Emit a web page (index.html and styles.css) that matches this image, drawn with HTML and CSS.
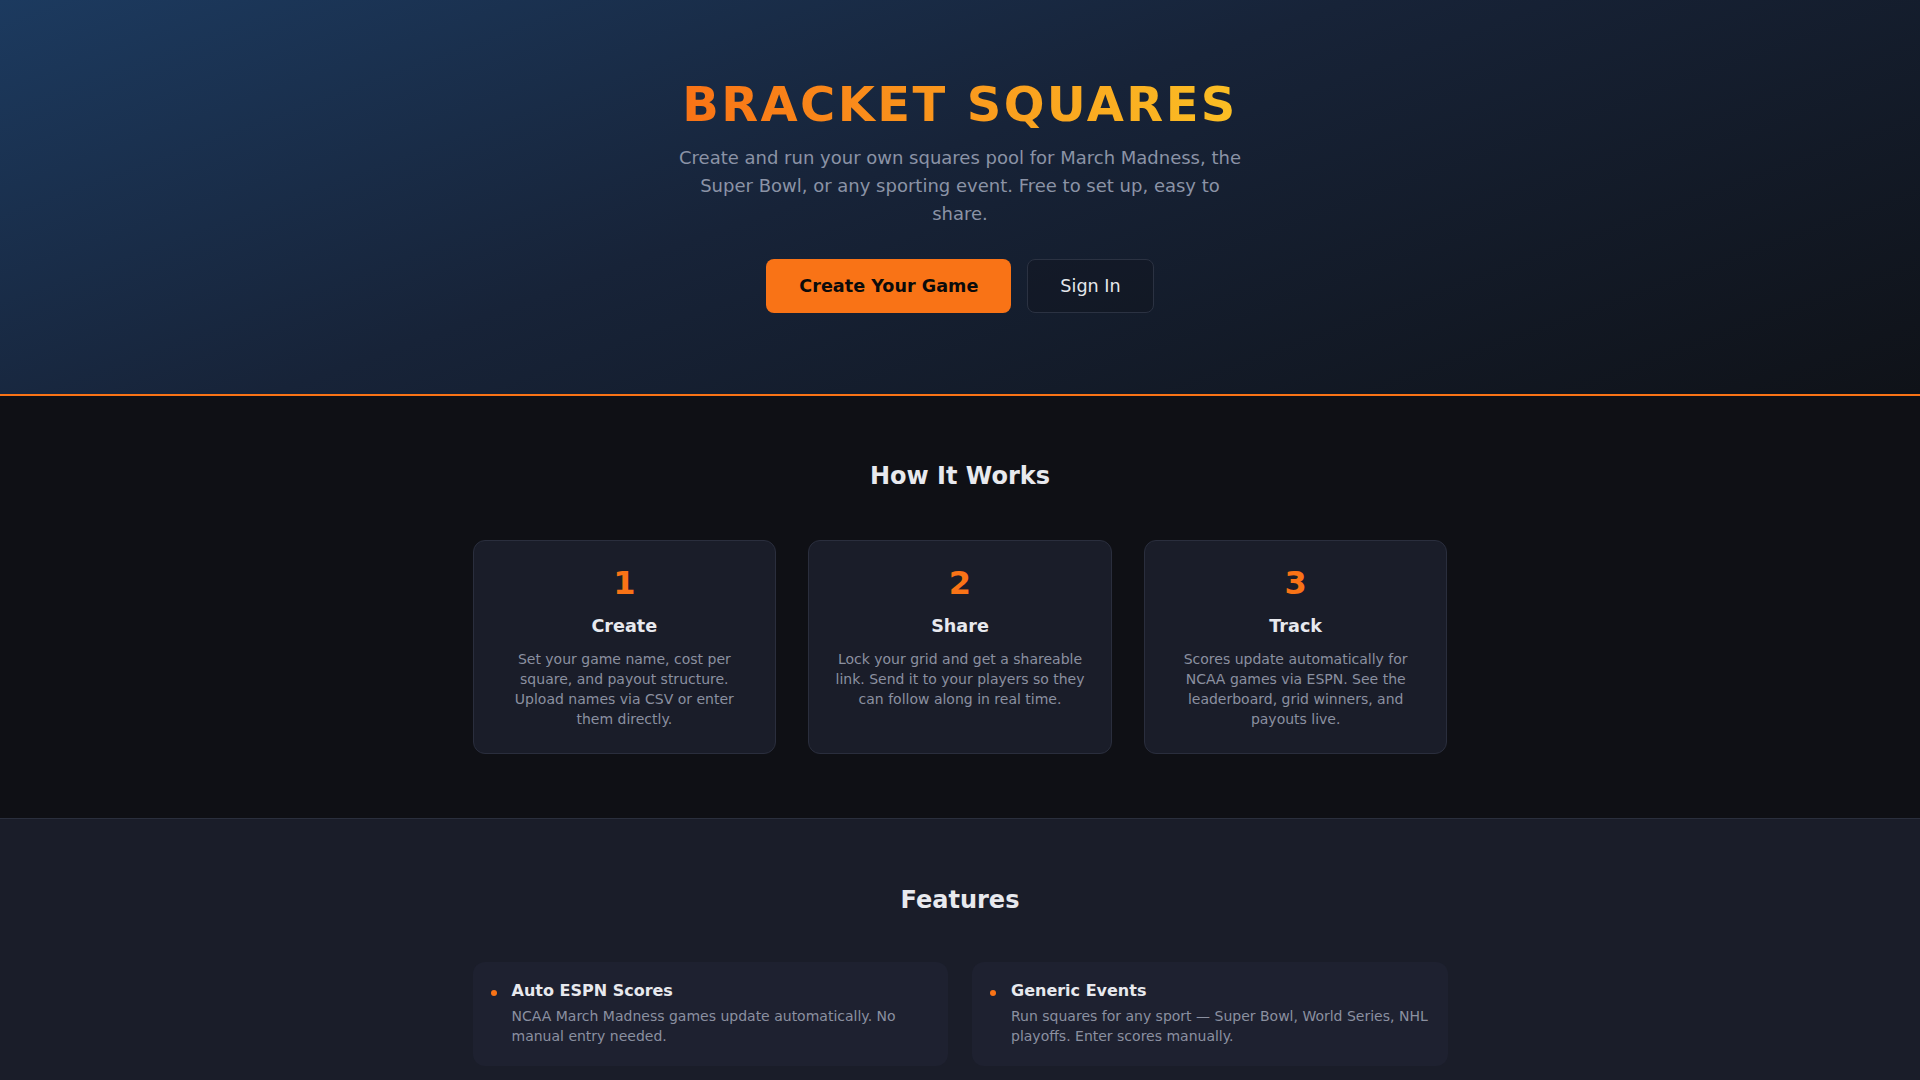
FILE: index.html
```html
<!DOCTYPE html>
<html lang="en">
<head>
  <meta charset="UTF-8">
  <title>Bracket Squares</title>
  <link rel="stylesheet" href="styles.css">
</head>
<body>
  <header class="hero">
    <h1 class="hero-title">BRACKET SQUARES</h1>
    <p class="hero-sub">Create and run your own squares pool for March Madness, the Super Bowl, or any sporting event. Free to set up, easy to share.</p>
    <div class="hero-actions">
      <a class="btn btn-primary" href="#">Create Your Game</a>
      <a class="btn btn-ghost" href="#">Sign In</a>
    </div>
  </header>

  <section class="steps">
    <h2 class="section-title">How It Works</h2>
    <div class="steps-grid">
      <div class="step-card">
        <div class="step-num">1</div>
        <h3>Create</h3>
        <p>Set your game name, cost per square, and payout structure. Upload names via CSV or enter them directly.</p>
      </div>
      <div class="step-card">
        <div class="step-num">2</div>
        <h3>Share</h3>
        <p>Lock your grid and get a shareable link. Send it to your players so they can follow along in real time.</p>
      </div>
      <div class="step-card">
        <div class="step-num">3</div>
        <h3>Track</h3>
        <p>Scores update automatically for NCAA games via ESPN. See the leaderboard, grid winners, and payouts live.</p>
      </div>
    </div>
  </section>

  <section class="features">
    <h2 class="section-title">Features</h2>
    <div class="features-grid">
      <div class="feature">
        <span class="feature-dot"></span>
        <div>
          <h4>Auto ESPN Scores</h4>
          <p>NCAA March Madness games update automatically. No manual entry needed.</p>
        </div>
      </div>
      <div class="feature">
        <span class="feature-dot"></span>
        <div>
          <h4>Generic Events</h4>
          <p>Run squares for any sport — Super Bowl, World Series, NHL playoffs. Enter scores manually.</p>
        </div>
      </div>
    </div>
  </section>
</body>
</html>
```

FILE: styles.css
```css
* {
  box-sizing: border-box;
}
body {
  margin: 0;
  font-family: "DejaVu Sans", Verdana, sans-serif;
  background: #0f1015;
  color: #e5e7eb;
}
h1, h2, h3, h4, p {
  margin: 0;
}

/* hero */
.hero {
  background: linear-gradient(160deg, #1c3a5f 0%, #172338 45%, #0f1218 100%);
  border-bottom: 2px solid #f97316;
  text-align: center;
  padding: 76px 24px 81px;
}
.hero-title {
  font-size: 3rem;
  font-weight: 700;
  letter-spacing: 0.05em;
  background: linear-gradient(90deg, #f97316, #fbbf24);
  -webkit-background-clip: text;
  background-clip: text;
  color: transparent;
  display: inline-block;
}
.hero-sub {
  max-width: 570px;
  margin: 12px auto 31px;
  font-size: 18px;
  line-height: 1.55;
  color: #8b93a6;
}
.hero-actions {
  display: flex;
  justify-content: center;
  gap: 16px;
}
.btn {
  font-size: 1.1rem;
  padding: 16px 32px;
  border-radius: 8px;
  text-decoration: none;
  border: 1px solid transparent;
}
.btn-primary {
  background: #f97316;
  color: #0b0b0b;
  font-weight: 700;
}
.btn-ghost {
  background: rgba(15, 17, 23, 0.3);
  border-color: #2b3242;
  color: #e5e7eb;
}

/* sections */
.section-title {
  font-size: 1.5rem;
  font-weight: 700;
  text-align: center;
  color: #e8e9ee;
  margin-bottom: 48px;
}
.steps {
  padding: 66px 24px 64px;
}
.steps .section-title {
  margin-bottom: 50px;
}
.steps-grid {
  display: grid;
  grid-template-columns: repeat(3, 1fr);
  gap: 32px;
  max-width: 975px;
  margin: 0 auto;
}
.step-card {
  background: #1a1d29;
  border: 1px solid #2a2e3d;
  border-radius: 12px;
  padding: 23px 24px 24px;
  text-align: center;
}
.step-num {
  font-size: 2rem;
  font-weight: 700;
  color: #f97316;
  margin-bottom: 14px;
}
.step-card h3 {
  font-size: 1.1rem;
  color: #e8e9ee;
  margin-bottom: 13px;
}
.step-card p {
  font-size: 14px;
  line-height: 20px;
  color: #8b90a0;
}

.features {
  background: #1a1d29;
  border-top: 1px solid #2a2f3d;
  padding: 67px 24px 64px;
}
.features-grid {
  display: grid;
  grid-template-columns: 1fr 1fr;
  gap: 24px;
  max-width: 975px;
  margin: 0 auto;
}
.feature {
  display: flex;
  gap: 15px;
  background: #1e2130;
  border-radius: 12px;
  padding: 19px 18px 20px;
}
.feature-dot {
  flex: none;
  width: 6px;
  height: 6px;
  margin-top: 9px;
  border-radius: 50%;
  background: #f97316;
}
.feature h4 {
  font-size: 1rem;
  color: #e8e9ee;
  margin-bottom: 6px;
}
.feature p {
  font-size: 14px;
  line-height: 20px;
  color: #8b90a0;
}
```
